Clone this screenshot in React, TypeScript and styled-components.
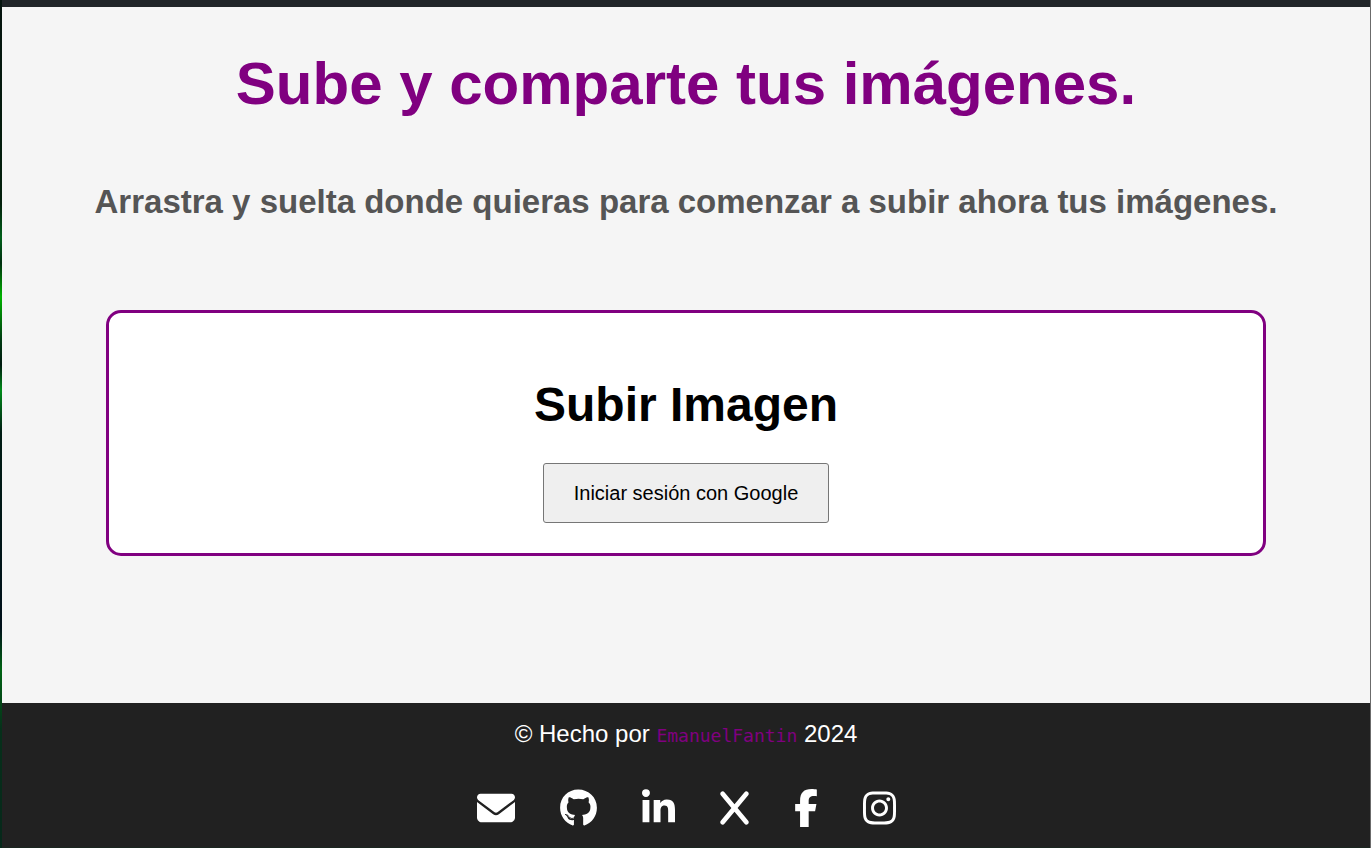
import React from "react";
import styled, { createGlobalStyle } from "styled-components";
import {
  FaEnvelope,
  FaFacebookF,
  FaGithub,
  FaInstagram,
  FaLinkedinIn,
  FaX,
} from "react-icons/fa6";

const GlobalStyle = createGlobalStyle`
  *, *::before, *::after { box-sizing: border-box; }
  body {
    margin: 0;
    background: #6b6b6b;
    font-family: "Liberation Sans", Arial, sans-serif;
  }
`;

const Page = styled.div`
  display: flex;
  flex-direction: column;
  min-height: 100vh;
  margin-right: 1px;
  padding-left: 2px;
  background: linear-gradient(
    to bottom,
    #06140f 0%,
    #03200c 24%,
    #00601a 28%,
    #003010 31%,
    #00b400 35%,
    #003c12 40%,
    #001a10 43%,
    #008c1a 46%,
    #001c14 51%,
    #00101a 74%,
    #006414 79%,
    #06301a 86%,
    #06281a 100%
  );
`;

const TopBar = styled.header`
  height: 7px;
  background: #212529;
`;

const Main = styled.main`
  flex: 1;
  display: flex;
  flex-direction: column;
  text-align: center;
  background: #f5f5f5;
`;

const Title = styled.h1`
  margin: 47px 0 0;
  font-size: 60px;
  line-height: 60px;
  color: #800080;
`;

const Subtitle = styled.h2`
  margin: 68px 0 0;
  font-size: 33px;
  line-height: 40px;
  color: #555;
`;

const UploadCard = styled.section`
  display: flex;
  flex-direction: column;
  align-items: center;
  gap: 29px;
  margin: 88px 104px 48px;
  padding: 63px 30px 30px;
  background: #fff;
  border: 3px solid #800080;
  border-radius: 15px;
`;

const CardTitle = styled.h2`
  margin: 0;
  font-size: 48px;
  line-height: 58px;
  color: #000;
`;

const LoginButton = styled.button`
  height: 60px;
  padding: 0 30px;
  font-family: inherit;
  font-size: 20px;
  color: #000;
  background: #efefef;
  border: 1px solid #767676;
  border-radius: 3px;
  cursor: pointer;
`;

const Footer = styled.footer`
  padding: 16px 0 20px;
  background: #212121;
  border-bottom: 1px solid #1b2620;
  color: #fff;
  text-align: center;
`;

const Credit = styled.p`
  margin: 0;
  font-size: 24px;
  line-height: 30px;
`;

const AuthorLink = styled.a`
  font-family: "DejaVu Sans Mono", Consolas, monospace;
  font-size: 18px;
  line-height: 1;
  color: #800080;
  text-decoration: none;
`;

const SocialLinks = styled.nav`
  display: flex;
  justify-content: center;
  gap: 45px;
  margin-top: 40px;
`;

const SocialLink = styled.a<{ $width: number }>`
  display: flex;
  color: #fff;

  svg {
    width: ${({ $width }) => $width}px;
    height: 38px;
  }
`;

const socials = [
  { label: "Correo", Icon: FaEnvelope, width: 38 },
  { label: "GitHub", Icon: FaGithub, width: 37 },
  { label: "LinkedIn", Icon: FaLinkedinIn, width: 33 },
  { label: "X", Icon: FaX, width: 29 },
  { label: "Facebook", Icon: FaFacebookF, width: 24 },
  { label: "Instagram", Icon: FaInstagram, width: 33 },
];

export default function App() {
  return (
    <>
      <GlobalStyle />
      <Page>
        <TopBar />
        <Main>
          <Title>Sube y comparte tus imágenes.</Title>
          <Subtitle>
            Arrastra y suelta donde quieras para comenzar a subir ahora tus
            imágenes.
          </Subtitle>
          <UploadCard>
            <CardTitle>Subir Imagen</CardTitle>
            <LoginButton type="button">Iniciar sesión con Google</LoginButton>
          </UploadCard>
        </Main>
        <Footer>
          <Credit>
            © Hecho por <AuthorLink href="#autor">EmanuelFantin</AuthorLink>{" "}
            2024
          </Credit>
          <SocialLinks aria-label="Redes sociales">
            {socials.map(({ label, Icon, width }) => (
              <SocialLink
                key={label}
                href={`#${label.toLowerCase()}`}
                aria-label={label}
                $width={width}
              >
                <Icon aria-hidden="true" />
              </SocialLink>
            ))}
          </SocialLinks>
        </Footer>
      </Page>
    </>
  );
}
